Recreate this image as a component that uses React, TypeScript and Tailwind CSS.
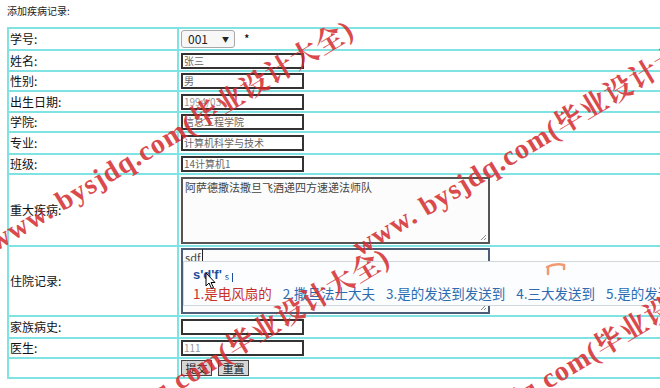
import React from 'react';

const cjk = '"Noto Sans CJK SC", "Liberation Sans", sans-serif';

function TextBox({ value, light }: { value?: string; light?: boolean }) {
    return (
        <div className={`w-[123px] h-[16px] border-2 border-[#333] bg-white px-[1px] flex items-center text-[10px] leading-[12px] ${light ? 'text-[#999]' : 'text-[#666]'}`}>
            {value}
        </div>
    );
}

function Grip() {
    return (
        <svg className="absolute right-[1px] bottom-[1px]" width="8" height="8" viewBox="0 0 8 8">
            <path d="M7 2 L2 7 M7 5 L5 7" stroke="#888" strokeWidth="1" />
        </svg>
    );
}

function Watermark({ className }: { className: string }) {
    return (
        <div
            className={`absolute origin-bottom-left -rotate-[31deg] whitespace-nowrap text-[28px] leading-[28px] font-bold text-[#d42b2f] opacity-85 pointer-events-none tracking-[1px] ${className}`}
            style={{ fontFamily: '"Liberation Serif", "Noto Serif CJK SC", "Noto Sans CJK SC", serif' }}
        >
            www. bysjdq.com(毕业设计大全)
        </div>
    );
}

export default function App() {
    const rows = [
        {
            label: '学号:',
            h: 'h-[22px]',
            content: (
                <div className="flex items-center gap-[9px]">
                    <div className="w-[54px] h-[18px] rounded-[3px] border border-[#a8a8a8] bg-[#f7f7f7] flex items-center justify-between pl-[6px] pr-[5px] text-[12px] text-[#222]">
                        <span>001</span>
                        <span className="text-[7px]">▼</span>
                    </div>
                    <span className="text-[12px]">*</span>
                </div>
            ),
        },
        { label: '姓名:', h: 'h-[21px]', content: <TextBox value="张三" /> },
        { label: '性别:', h: 'h-[20px]', content: <TextBox value="男" /> },
        { label: '出生日期:', h: 'h-[21px]', content: <TextBox value="1994/03" light /> },
        { label: '学院:', h: 'h-[20px]', content: <TextBox value="信息工程学院" /> },
        { label: '专业:', h: 'h-[22px]', content: <TextBox value="计算机科学与技术" /> },
        { label: '班级:', h: 'h-[20px]', content: <TextBox value="14计算机1" /> },
        {
            label: '重大疾病:',
            h: 'h-[72px]',
            content: (
                <div className="relative w-[309px] h-[67px] border-2 border-[#555] bg-[#fcfcfc] px-[2px] pt-[2px] text-[11px] leading-[13px] text-[#444]">
                    阿萨德撒法撒旦飞酒递四方速递法师队
                    <Grip />
                </div>
            ),
        },
        {
            label: '住院记录:',
            h: 'h-[70px]',
            content: (
                <div className="relative w-[309px] h-[66px] border-2 border-[#4c5d76] bg-[#fcfcfc] px-[2px] pt-[1px] text-[11px] leading-[13px] text-[#444]">
                    <span className="underline">sdf</span>
                    <span className="border-l border-[#222] ml-[1px]"></span>
                    <Grip />
                </div>
            ),
        },
        { label: '家族病史:', h: 'h-[22px]', content: <TextBox /> },
        { label: '医生:', h: 'h-[20px]', content: <TextBox value="111" light /> },
        {
            label: '',
            h: 'h-[20px]',
            content: (
                <div className="flex gap-[6px]">
                    <div className="w-[31px] h-[16px] border border-[#444] bg-[#d6d6d6] flex items-center justify-center text-[11px] text-[#222]">提交</div>
                    <div className="w-[31px] h-[16px] border border-[#444] bg-[#d6d6d6] flex items-center justify-center text-[11px] text-[#222]">重置</div>
                </div>
            ),
        },
    ];

    return (
        <div className="relative w-[660px] h-[388px] overflow-hidden bg-white text-black" style={{ fontFamily: cjk }}>
            <div className="pl-[7px] pt-[5px] h-[27px] text-[10px] leading-[12px] text-[#222]">添加疾病记录:</div>

            <div className="ml-[7px] w-[720px] border-t-2 border-l-2 border-[#7fe3e3]">
                {rows.map((r, i) => (
                    <div key={i} className={`flex border-b-2 border-[#7fe3e3] ${r.h}`}>
                        <div className="w-[170px] shrink-0 border-r-2 border-[#7fe3e3] pl-[1px] flex items-center text-[12px] text-[#111]">
                            {r.label}
                        </div>
                        <div className="pl-[2px] flex items-center">{r.content}</div>
                    </div>
                ))}
            </div>

            {/* IME candidate window */}
            <div className="absolute left-[183px] top-[261px] w-[500px] h-[45px] border border-[#cfd8de] bg-[#fbfdfe]">
                <div className="pl-[9px] pt-[4px] h-[20px] flex items-end gap-[3px] text-[#1f4f9c]">
                    <span className="text-[13px] font-bold leading-[14px]" style={{ fontFamily: '"Liberation Sans", sans-serif' }}>s'd'f'</span>
                    <span className="text-[9px] leading-[10px]">s</span>
                    <span className="w-px h-[9px] bg-[#1f4f9c]"></span>
                </div>
                <div className="pl-[9px] pt-[3px] flex gap-[11px] text-[13.5px] leading-[16px] text-[#2d6cb1] whitespace-nowrap">
                    <span className="text-[#c9302c]">1.是电风扇的</span>
                    <span>2.撒旦法士大夫</span>
                    <span>3.是的发送到发送到</span>
                    <span>4.三大发送到</span>
                    <span>5.是的发送</span>
                </div>
            </div>

            {/* small orange mark on the candidate bar */}
            <svg className="absolute left-[545px] top-[262px]" width="22" height="14" viewBox="0 0 22 14">
                <path d="M2 5 Q10 1 19 3 L19 7 M3 5 L3 12" stroke="#ef9a72" strokeWidth="2.5" fill="none" strokeLinecap="round" />
            </svg>

            {/* mouse pointer */}
            <svg className="absolute left-[205px] top-[272px]" width="12" height="18" viewBox="0 0 12 18">
                <path d="M1 1 L1 14 L4 11 L6.5 16.5 L8.5 15.5 L6 10.5 L10 10.5 Z" fill="#fff" stroke="#000" strokeWidth="1" />
            </svg>

            <Watermark className="left-[-2px] top-[228px]" />
            <Watermark className="left-[362px] top-[233px]" />
            <Watermark className="left-[34px] top-[456px]" />
            <Watermark className="left-[402px] top-[455px]" />
        </div>
    );
}
